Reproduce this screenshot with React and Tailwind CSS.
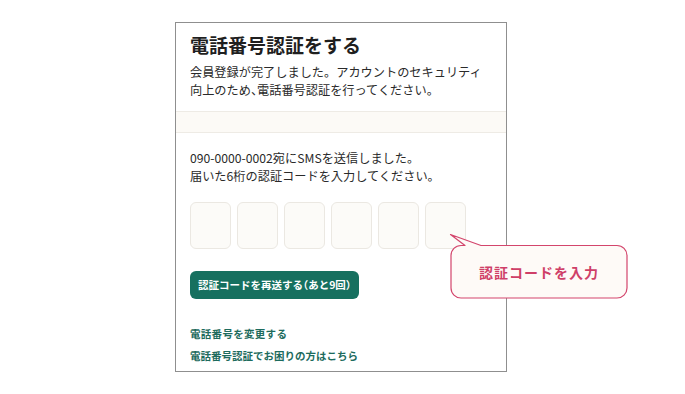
import React from 'react';

const jp = { fontFamily: '"Noto Sans CJK JP", "Noto Sans", sans-serif' };

const Half = ({ children }) => (
  <span className="[font-feature-settings:'halt']">{children}</span>
);

const CodeBoxes = () => {
  const boxes = [0, 1, 2, 3, 4, 5];
  return (
    <div className="mt-[17px] flex gap-[6px]">
      {boxes.map((i) => (
        <div
          key={i}
          className="h-[47px] w-[41px] rounded-[6px] border border-[#ebe8e2] bg-[#fcfbf8]"
        />
      ))}
    </div>
  );
};

const Callout = () => (
  <div className="absolute left-[449px] top-[233px] h-[67px] w-[180px]">
    <svg width="180" height="67" viewBox="0 0 180 67" className="absolute inset-0">
      <path
        d="M12 12.5 H16 L1.5 1.5 L32 12.5 H168 A10 10 0 0 1 178 22.5 V55 A10 10 0 0 1 168 65 H12 A10 10 0 0 1 2 55 V22.5 A10 10 0 0 1 12 12.5 Z"
        fill="#fefaf7"
        stroke="#d3456c"
        strokeWidth="1.2"
        strokeLinejoin="round"
      />
    </svg>
    <div className="absolute left-0 right-0 top-[13px] flex h-[52px] items-center justify-center">
      <span className="text-[14px] font-bold tracking-[1px] text-[#cf3f68]" style={jp}>
        認証コードを入力
      </span>
    </div>
  </div>
);

export default function App() {
  return (
    <div className="relative h-[394px] w-[685px] bg-white" style={jp}>
      <div className="pl-[175px] pt-[22px]">
        <div className="w-[332px] border border-[#8f8f8f] bg-white">
          <div className="px-[14px] pb-[12px] pt-[9px]">
            <h1 className="text-[19px] font-bold leading-[26px] text-[#1f1f1f]">
              電話番号認証をする
            </h1>
            <p className="mt-[5px] text-[12.2px] leading-[18px] text-[#2a2a2a]">
              会員登録が完了しました。アカウントのセキュリティ
              <br />
              向上のため<Half>、</Half>電話番号認証を行ってください。
            </p>
          </div>
          <div className="h-[22px] border-y border-[#eeebe5] bg-[#fcfaf6]" />
          <div className="px-[14px] pb-[5px] pt-[16px]">
            <p className="text-[12.2px] leading-[18px] text-[#2a2a2a]">
              090-0000-0002宛にSMSを送信しました。
              <br />
              届いた6桁の認証コードを入力してください。
            </p>
            <CodeBoxes />
            <button className="mt-[22px] flex h-[28px] w-[169px] items-center justify-center rounded-[6px] bg-[#16705f] text-[10.5px] font-bold text-white">
              認証コードを再送する<Half>（</Half>あと9回<Half>）</Half>
            </button>
            <div className="mt-[25px] flex flex-col gap-[2px]">
              <a className="text-[10.5px] font-bold leading-[20px] tracking-[0.3px] text-[#1d6b5d]">
                電話番号を変更する
              </a>
              <a className="text-[10.5px] font-bold leading-[20px] text-[#1d6b5d]">
                電話番号認証でお困りの方はこちら
              </a>
            </div>
          </div>
        </div>
      </div>
      <Callout />
    </div>
  );
}
